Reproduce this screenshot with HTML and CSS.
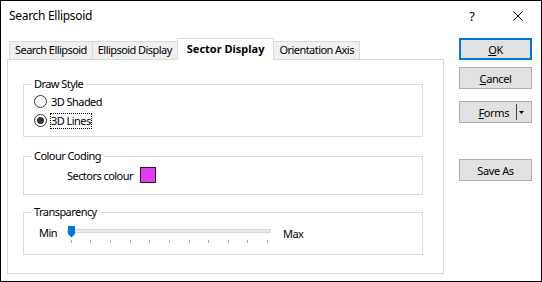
FILE: index.html
```html
<!DOCTYPE html>
<html lang="en">

<head>
    <meta charset="UTF-8">
    <title>Search Ellipsoid</title>
    <link rel="stylesheet" href="styles.css">
</head>

<body>
    <div class="dialog">
        <header class="titlebar">
            <span class="title">Search Ellipsoid</span>
            <div class="caption">
                <span class="caption-btn">?</span>
                <span class="caption-btn">
                    <svg width="10" height="10" viewBox="0 0 10 10">
                        <path d="M0.5 0.5 L9.5 9.5 M9.5 0.5 L0.5 9.5" stroke="#000" stroke-width="1" fill="none"/>
                    </svg>
                </span>
            </div>
        </header>
        <main class="content">
            <section class="tabs-area">
                <ul class="tabs">
                    <li class="tab">Search Ellipsoid</li>
                    <li class="tab">Ellipsoid Display</li>
                    <li class="tab active">Sector Display</li>
                    <li class="tab">Orientation Axis</li>
                </ul>
                <div class="panel">
                    <fieldset class="group group-draw">
                        <legend>Draw Style</legend>
                        <div class="radio">
                            <span class="radio-dot"></span>
                            <span class="radio-label">3D Shaded</span>
                        </div>
                        <div class="radio checked">
                            <span class="radio-dot"></span>
                            <span class="radio-label focus">3D Lines</span>
                        </div>
                    </fieldset>
                    <fieldset class="group group-colour">
                        <legend>Colour Coding</legend>
                        <div class="colour-row">
                            <span>Sectors colour</span>
                            <span class="swatch"></span>
                        </div>
                    </fieldset>
                    <fieldset class="group group-trans">
                        <legend>Transparency</legend>
                        <div class="slider-row">
                            <span class="slider-min">Min</span>
                            <svg class="slider" width="206" height="18" viewBox="0 0 206 18">
                                <rect x="1.5" y="3.5" width="203" height="3" fill="#e7eaea" stroke="#d6d6d6"/>
                                <g stroke="#a8a8a8" stroke-width="1">
                                    <line x1="5.5" y1="14" x2="5.5" y2="17"/>
                                    <line x1="24.5" y1="14" x2="24.5" y2="17"/>
                                    <line x1="44.5" y1="14" x2="44.5" y2="17"/>
                                    <line x1="64.5" y1="14" x2="64.5" y2="17"/>
                                    <line x1="83.5" y1="14" x2="83.5" y2="17"/>
                                    <line x1="103.5" y1="14" x2="103.5" y2="17"/>
                                    <line x1="123.5" y1="14" x2="123.5" y2="17"/>
                                    <line x1="142.5" y1="14" x2="142.5" y2="17"/>
                                    <line x1="162.5" y1="14" x2="162.5" y2="17"/>
                                    <line x1="181.5" y1="14" x2="181.5" y2="17"/>
                                    <line x1="201.5" y1="14" x2="201.5" y2="17"/>
                                </g>
                                <path d="M2 0 H9 V8 L5.5 11.5 L2 8 Z" fill="#0078d7"/>
                            </svg>
                            <span class="slider-max">Max</span>
                        </div>
                    </fieldset>
                </div>
            </section>
            <aside class="buttons">
                <button class="btn btn-default"><u>O</u>K</button>
                <button class="btn btn-cancel"><u>C</u>ancel</button>
                <button class="btn btn-forms">
                    <span><u>F</u>orms</span>
                    <span class="btn-sep"></span>
                    <svg width="5" height="3" viewBox="0 0 5 3"><path d="M0 0 H5 L2.5 3 Z" fill="#000"/></svg>
                </button>
                <button class="btn btn-save">Save As</button>
            </aside>
        </main>
    </div>
</body>

</html>
```

FILE: styles.css
```css
* {
    box-sizing: border-box;
}

ul {
    list-style: none;
    margin: 0;
    padding: 0;
}

body {
    margin: 0;
    background: #fff;
}

.dialog {
    width: 542px;
    height: 282px;
    border: 1px solid #000;
    display: flex;
    flex-direction: column;
    font-family: "Noto Sans", sans-serif;
    font-size: 11px;
    letter-spacing: -0.55px;
    color: #000;
    background: #fff;
}

.titlebar {
    height: 29px;
    display: flex;
    align-items: center;
    padding-left: 8px;
    font-size: 12px;
    letter-spacing: -0.3px;
}

.titlebar>.caption {
    margin-left: auto;
    display: flex;
    height: 100%;
}

.titlebar>.caption>.caption-btn {
    width: 46px;
    height: 100%;
    display: flex;
    align-items: center;
    justify-content: center;
    font-size: 13px;
}

.content {
    flex: 1;
    display: flex;
    padding-top: 8px;
}

.tabs-area {
    padding-left: 6px;
}

.tabs {
    display: flex;
    align-items: flex-end;
    padding-left: 2px;
    height: 21px;
}

.tabs>.tab {
    height: 18px;
    line-height: 16px;
    padding: 0 5px;
    border: 1px solid #d9d9d9;
    border-bottom: none;
    background: #f0f0f0;
    margin-left: -1px;
    white-space: nowrap;
}

.tabs>.tab:first-child {
    margin-left: 0;
}

.tabs>.tab.active {
    height: 22px;
    line-height: 19px;
    margin-bottom: -1px;
    padding: 0 9px;
    background: #fff;
    font-weight: bold;
    letter-spacing: 0;
    position: relative;
    z-index: 1;
}

.panel {
    width: 437px;
    height: 215px;
    border: 1px solid #d9d9d9;
    padding: 16px 20px 0 15px;
}

.group {
    margin: 0;
    padding: 0 0 6px 0;
    border: 1px solid #dcdcdc;
    min-width: 0;
}

.group>legend {
    margin-left: 7px;
    padding: 0 3px;
    line-height: 16px;
}

.group-colour {
    margin-top: 11px;
    padding-bottom: 11px;
}

.group-trans {
    margin-top: 9px;
    padding-bottom: 10px;
}

.radio {
    display: flex;
    align-items: center;
    height: 19px;
    padding-left: 10px;
}

.radio>.radio-dot {
    width: 13px;
    height: 13px;
    border: 1px solid #333;
    border-radius: 50%;
    background: #fff;
    display: flex;
    align-items: center;
    justify-content: center;
}

.radio.checked>.radio-dot::after {
    content: "";
    width: 7px;
    height: 7px;
    border-radius: 50%;
    background: #333;
}

.radio>.radio-label {
    margin-left: 3px;
    line-height: 14px;
    border: 1px dotted transparent;
}

.radio>.radio-label.focus {
    border-color: #000;
}

.colour-row {
    display: flex;
    align-items: center;
    gap: 7px;
    margin-top: 3px;
    padding-left: 43px;
}

.swatch {
    width: 16px;
    height: 16px;
    border: 1px solid #222;
    background: #e23cf5;
}

.slider-row {
    display: flex;
    align-items: flex-start;
    padding-left: 15px;
    padding-top: 6px;
}

.slider-min {
    width: 27px;
    line-height: 14px;
}

.slider-max {
    margin-left: 11px;
    line-height: 16px;
}

.slider {
    display: block;
}

.buttons {
    margin-left: 15px;
    display: flex;
    flex-direction: column;
}

.btn {
    width: 73px;
    height: 22px;
    padding: 0;
    border: 1px solid #adadad;
    background: #e1e1e1;
    font-family: "Noto Sans", sans-serif;
    font-size: 11px;
    letter-spacing: -0.4px;
    color: #000;
    display: flex;
    align-items: center;
    justify-content: center;
}

.btn-default {
    border: 2px solid #0078d7;
}

.btn-cancel {
    margin-top: 7px;
}

.btn-forms {
    margin-top: 12px;
    justify-content: flex-end;
    padding-right: 7px;
}

.btn-forms>.btn-sep {
    width: 1px;
    height: 16px;
    background: #444;
    margin: 0 2px 0 7px;
}

.btn-save {
    margin-top: 36px;
}
```
